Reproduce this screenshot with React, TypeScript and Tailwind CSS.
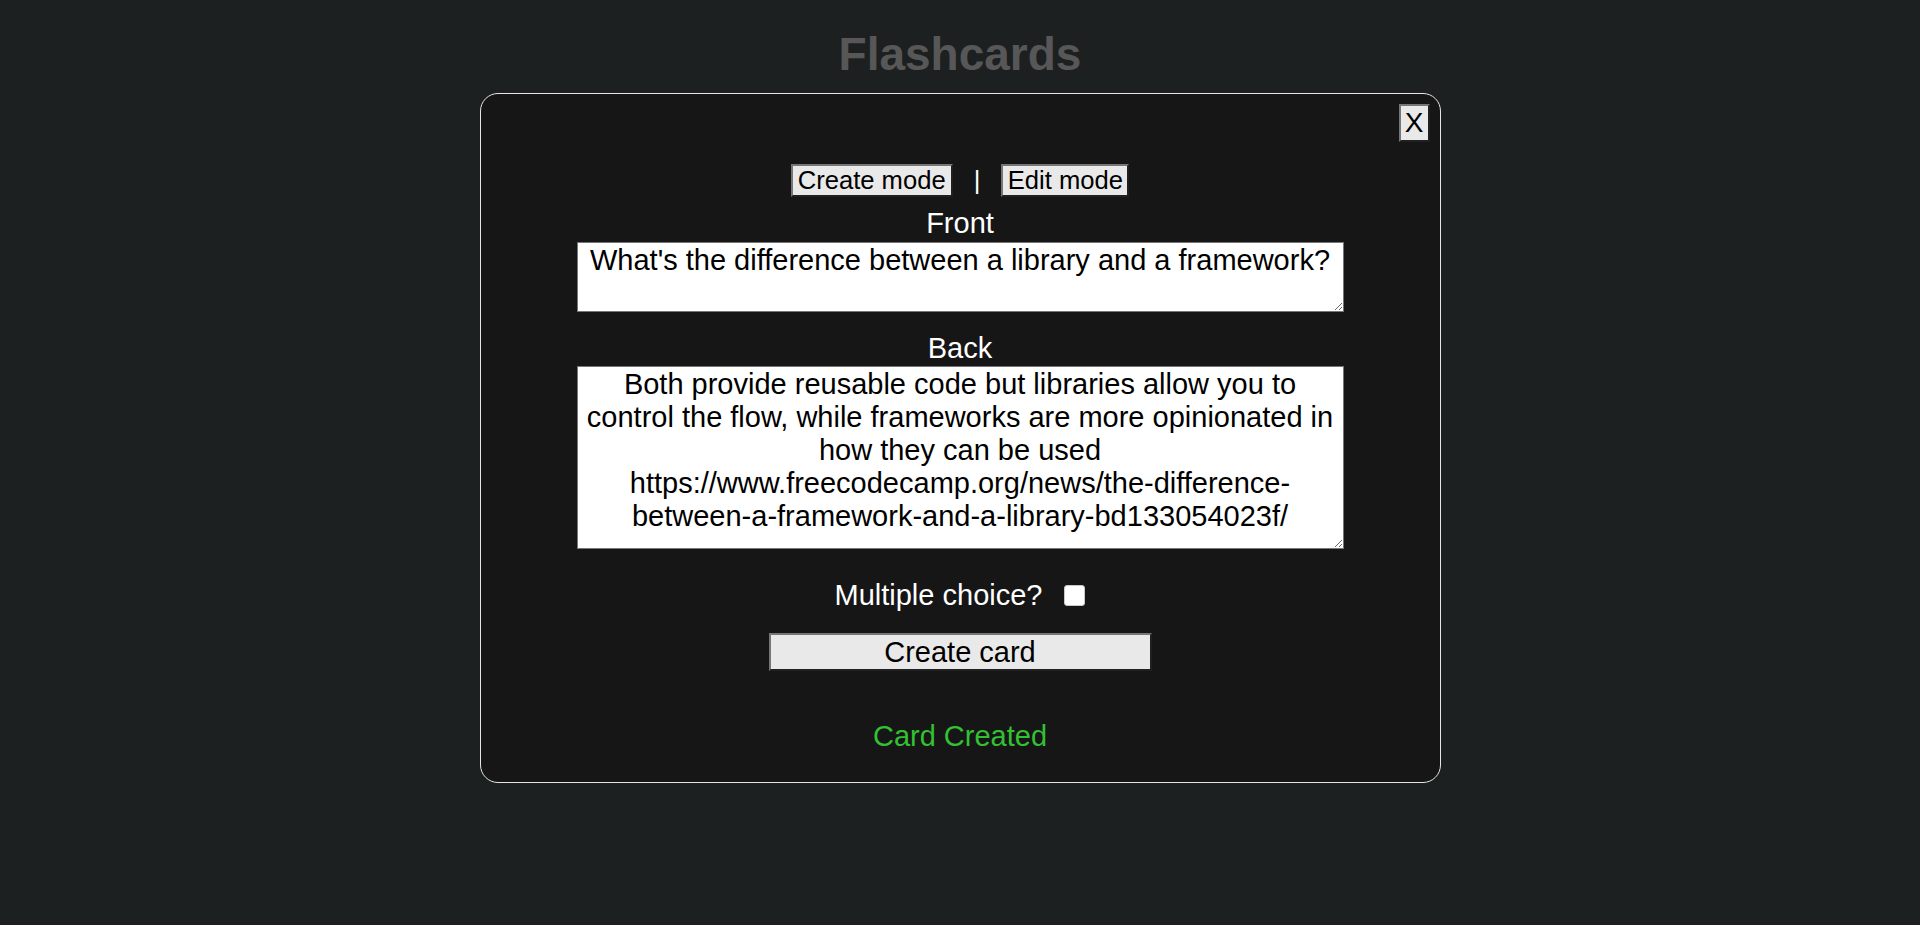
import { useState } from "react";

const FRONT = "What's the difference between a library and a framework?";
const BACK =
  "Both provide reusable code but libraries allow you to control the flow, while frameworks are more opinionated in how they can be used\nhttps://www.freecodecamp.org/news/the-difference-between-a-framework-and-a-library-bd133054023f/";

const btn =
  "bg-[#e9e9e9] text-black border-2 border-t-[#767676] border-l-[#767676] border-r-[#202020] border-b-[#202020] flex items-center justify-center";

export default function App() {
  const [front, setFront] = useState(FRONT);
  const [back, setBack] = useState(BACK);
  const [multi, setMulti] = useState(false);

  return (
    <div
      className="min-h-screen bg-[#1d2020] flex flex-col items-center"
      style={{ fontFamily: '"Liberation Sans", Arial, sans-serif' }}
    >
      <h1 className="mt-[28px] text-[46px] leading-[53px] font-bold text-[#575757]">
        Flashcards
      </h1>

      <div className="relative mt-[12px] w-[961px] h-[690px] rounded-[18px] border border-[#e6e6e6] bg-[#161616] flex flex-col items-center pt-[70px]">
        <button className={`${btn} absolute top-[10px] right-[10px] w-[31px] h-[38px] text-[28px] leading-none`}>
          X
        </button>

        {/* mode switch */}
        <div className="flex items-center gap-[21px] h-[33px]">
          <button className={`${btn} w-[162px] h-[33px] text-[25.6px] leading-none`}>
            Create mode
          </button>
          <span className="text-white text-[25.6px] leading-none">|</span>
          <button className={`${btn} w-[128px] h-[33px] text-[25.6px] leading-none`}>
            Edit mode
          </button>
        </div>

        <label className="mt-[10px] text-white text-[29px] leading-[33px]">Front</label>
        <textarea
          value={front}
          onChange={(e) => setFront(e.target.value)}
          className="mt-[2px] w-[767px] h-[70px] bg-white text-black text-center text-[29px] leading-[33px] border border-[#767676] px-[2px] py-[1px] outline-none"
        />

        <label className="mt-[20px] text-white text-[29px] leading-[33px]">Back</label>
        <textarea
          value={back}
          onChange={(e) => setBack(e.target.value)}
          className="mt-[1px] w-[767px] h-[183px] bg-white text-black text-center text-[29px] leading-[33px] border border-[#767676] px-[2px] py-[1px] outline-none"
        />

        <div className="mt-[30px] flex items-center gap-[22px] h-[33px]">
          <span className="text-white text-[29px] leading-[33px]">Multiple choice?</span>
          <input
            type="checkbox"
            checked={multi}
            onChange={(e) => setMulti(e.target.checked)}
            className="appearance-none w-[21px] h-[21px] bg-white border border-[#c8c8c8] rounded-[3px]"
          />
        </div>

        <button className={`${btn} mt-[21px] w-[383px] h-[38px] text-[29px] leading-none`}>
          Create card
        </button>

        <p className="mt-[49px] text-[#33c033] text-[29px] leading-[33px]">Card Created</p>
      </div>
    </div>
  );
}
